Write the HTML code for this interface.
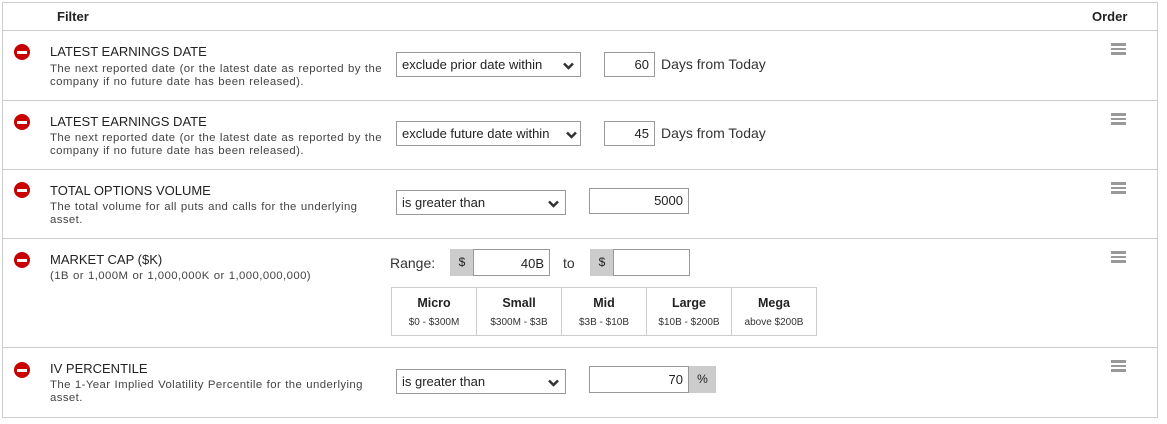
<!DOCTYPE html>
<html><head><meta charset="utf-8"><style>
body{margin:0;width:1167px;height:424px;background:#fff;font-family:"Liberation Sans",sans-serif;color:#222;position:relative;overflow:hidden}
.a{position:absolute}
.frame{left:2px;top:2px;width:1154px;height:414px;border:1px solid #ccc}
.hl{left:3px;width:1154px;height:1px;background:#ccc}
.ic{width:16px;height:16px;border-radius:50%;background:#c80000;left:14px}
.ic:after{content:"";position:absolute;left:3px;top:6.5px;width:10px;height:3px;background:#fff}
.t{left:50px;font-size:13px;color:#222}
.d{left:50px;font-size:11.4px;letter-spacing:0.4px;word-spacing:0.5px;color:#444;line-height:12.5px;white-space:nowrap}
.sel{border:1px solid #999;box-sizing:border-box;font-size:13px;padding:4px 0 0 5px;color:#222;height:25px;white-space:nowrap;overflow:hidden}
.sel svg{position:absolute;right:6px;top:9px}
.inp{border:1px solid #999;box-sizing:border-box;font-size:13px;text-align:right;padding:4px 5px 0 0;height:25px}
.lab{font-size:14px;color:#333}
.ham{left:1111px;width:15px;height:11px}
.ham i{display:block;height:2.5px;background:#999;margin-bottom:2px}
.g{background:#ccc;font-size:12px;text-align:center;box-sizing:border-box;padding-top:6px}
table{border-collapse:collapse;font-size:12px;text-align:center}
td{border:1px solid #ccc;width:84px;height:47px;padding:0}
td b{display:block;font-size:12.5px;color:#222;margin-bottom:4px}
td span{font-size:10px;color:#333}
</style></head><body>
<div class="a frame"></div>
<div class="a" style="left:57px;top:9px;font-weight:bold;font-size:13px">Filter</div>
<div class="a" style="left:1092px;top:9px;font-weight:bold;font-size:13px">Order</div>
<div class="a hl" style="top:30px"></div>
<div class="a hl" style="top:100px"></div>
<div class="a hl" style="top:169px"></div>
<div class="a hl" style="top:238px"></div>
<div class="a hl" style="top:347px"></div>

<div class="a ic" style="top:44px"></div>
<div class="a t" style="top:44px">LATEST EARNINGS DATE</div>
<div class="a d" style="top:63px">The next reported date (or the latest date as reported by the<br>company if no future date has been released).</div>
<div class="a sel" style="left:396px;top:52px;width:185px">exclude prior date within<svg width="11" height="8" viewBox="0 0 11 8"><path d="M1 1.5L5.5 6 10 1.5" stroke="#333" stroke-width="2.5" fill="none"/></svg></div>
<div class="a inp" style="left:604px;top:52px;width:51px">60</div>
<div class="a lab" style="left:661px;top:56px">Days from Today</div>
<div class="a ham" style="top:43px"><i></i><i></i><i></i></div>

<div class="a ic" style="top:114px"></div>
<div class="a t" style="top:114px">LATEST EARNINGS DATE</div>
<div class="a d" style="top:132px">The next reported date (or the latest date as reported by the<br>company if no future date has been released).</div>
<div class="a sel" style="left:396px;top:121px;width:185px">exclude future date within<svg width="11" height="8" viewBox="0 0 11 8" style="right:3px;background:#fff"><path d="M1 1.5L5.5 6 10 1.5" stroke="#333" stroke-width="2.5" fill="none"/></svg></div>
<div class="a inp" style="left:604px;top:121px;width:51px">45</div>
<div class="a lab" style="left:661px;top:125px">Days from Today</div>
<div class="a ham" style="top:113px"><i></i><i></i><i></i></div>

<div class="a ic" style="top:182px"></div>
<div class="a t" style="top:183px">TOTAL OPTIONS VOLUME</div>
<div class="a d" style="top:201px">The total volume for all puts and calls for the underlying<br>asset.</div>
<div class="a sel" style="left:396px;top:190px;width:170px">is greater than<svg width="11" height="8" viewBox="0 0 11 8"><path d="M1 1.5L5.5 6 10 1.5" stroke="#333" stroke-width="2.5" fill="none"/></svg></div>
<div class="a inp" style="left:589px;top:188px;width:100px;height:26px">5000</div>
<div class="a ham" style="top:182px"><i></i><i></i><i></i></div>

<div class="a ic" style="top:252px"></div>
<div class="a t" style="top:252px">MARKET CAP ($K)</div>
<div class="a d" style="top:270px">(1B or 1,000M or 1,000,000K or 1,000,000,000)</div>
<div class="a lab" style="left:390px;top:255px">Range:</div>
<div class="a g" style="left:450px;top:249px;width:24px;height:27px">$</div>
<div class="a inp" style="left:473px;top:249px;width:77px;height:27px;padding-top:6px">40B</div>
<div class="a lab" style="left:563px;top:255px">to</div>
<div class="a g" style="left:590px;top:249px;width:24px;height:27px">$</div>
<div class="a inp" style="left:613px;top:249px;width:77px;height:27px"></div>
<table class="a" style="left:391px;top:287px">
<tr><td><b>Micro</b><span>$0 - $300M</span></td><td><b>Small</b><span>$300M - $3B</span></td><td><b>Mid</b><span>$3B - $10B</span></td><td><b>Large</b><span>$10B - $200B</span></td><td><b>Mega</b><span>above $200B</span></td></tr>
</table>
<div class="a ham" style="top:251px"><i></i><i></i><i></i></div>

<div class="a ic" style="top:362px"></div>
<div class="a t" style="top:361px">IV PERCENTILE</div>
<div class="a d" style="top:379px">The 1-Year Implied Volatility Percentile for the underlying<br>asset.</div>
<div class="a sel" style="left:396px;top:369px;width:170px">is greater than<svg width="11" height="8" viewBox="0 0 11 8"><path d="M1 1.5L5.5 6 10 1.5" stroke="#333" stroke-width="2.5" fill="none"/></svg></div>
<div class="a inp" style="left:589px;top:366px;width:100px;height:27px;padding-top:5px">70</div>
<div class="a g" style="left:689px;top:366px;width:27px;height:27px">%</div>
<div class="a ham" style="top:360px"><i></i><i></i><i></i></div>
</body></html>
